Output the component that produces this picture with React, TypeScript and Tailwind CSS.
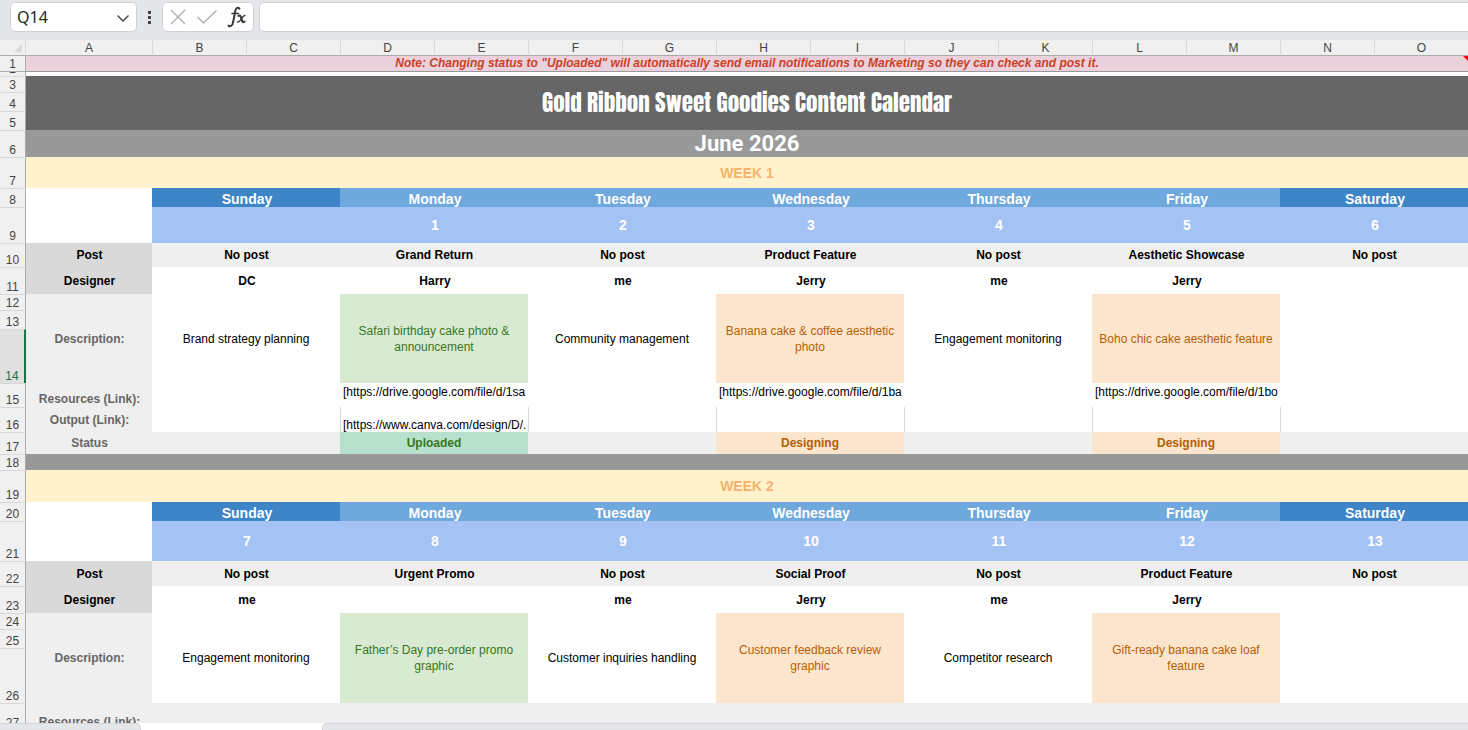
import React from "react";

type Tone = "green" | "orange";

interface Day {
  name: string;
  date: string;
  post: string;
  designer: string;
  description: string;
  tone?: Tone;
  resource?: string;
  output?: string;
  status?: string;
}

const weekOne: Day[] = [
  { name: "Sunday", date: "", post: "No post", designer: "DC", description: "Brand strategy planning" },
  {
    name: "Monday", date: "1", post: "Grand Return", designer: "Harry",
    description: "Safari birthday cake photo & announcement", tone: "green",
    resource: "[https://drive.google.com/file/d/1sa", output: "[https://www.canva.com/design/D/.", status: "Uploaded",
  },
  { name: "Tuesday", date: "2", post: "No post", designer: "me", description: "Community management" },
  {
    name: "Wednesday", date: "3", post: "Product Feature", designer: "Jerry",
    description: "Banana cake & coffee aesthetic photo", tone: "orange",
    resource: "[https://drive.google.com/file/d/1ba", status: "Designing",
  },
  { name: "Thursday", date: "4", post: "No post", designer: "me", description: "Engagement monitoring" },
  {
    name: "Friday", date: "5", post: "Aesthetic Showcase", designer: "Jerry",
    description: "Boho chic cake aesthetic feature", tone: "orange",
    resource: "[https://drive.google.com/file/d/1bo", status: "Designing",
  },
  { name: "Saturday", date: "6", post: "No post", designer: "", description: "" },
];

const weekTwo: Day[] = [
  { name: "Sunday", date: "7", post: "No post", designer: "me", description: "Engagement monitoring" },
  { name: "Monday", date: "8", post: "Urgent Promo", designer: "", description: "Father’s Day pre-order promo graphic", tone: "green" },
  { name: "Tuesday", date: "9", post: "No post", designer: "me", description: "Customer inquiries handling" },
  { name: "Wednesday", date: "10", post: "Social Proof", designer: "Jerry", description: "Customer feedback review graphic", tone: "orange" },
  { name: "Thursday", date: "11", post: "No post", designer: "me", description: "Competitor research" },
  { name: "Friday", date: "12", post: "Product Feature", designer: "Jerry", description: "Gift-ready banana cake loaf feature", tone: "orange" },
  { name: "Saturday", date: "13", post: "No post", designer: "", description: "" },
];

const columns = "ABCDEFGHIJKLMNO".split("");

const toneFill: Record<Tone, string> = {
  green: "bg-[#d9ead3] text-[#38761d]",
  orange: "bg-[#fce5cd] text-[#b45f06]",
};

const statusFill: Record<Tone, string> = {
  green: "bg-[#b7e1cd] text-[#38761d]",
  orange: "bg-[#fce5cd] text-[#b45f06]",
};

function RowNumber({ n, active = false }: { n: number; active?: boolean }) {
  const state = active
    ? "border-r-2 border-r-[#1e7145] bg-[#e0e0e0] text-[#1e7145]"
    : "border-r border-r-[#ababab] bg-[#f0f0f0] text-[#444]";
  return (
    <th scope="row" className={`border-t border-t-[#d8d8d8] p-0 text-center align-bottom text-xs leading-[14px] font-normal ${state}`}>
      {n}
    </th>
  );
}

function Label({ children, dark = false, rows = 1, align = "align-middle" }: { children: string; dark?: boolean; rows?: number; align?: string }) {
  const fill = dark ? "bg-[#d9d9d9] text-black" : "bg-[#efefef] text-[#666]";
  return (
    <th rowSpan={rows} className={`p-0 pl-px text-center text-xs leading-4 font-bold ${align} ${fill}`}>
      {children}
    </th>
  );
}

function WeekTitle({ n, label, height }: { n: number; label: string; height: string }) {
  return (
    <tr className={height}>
      <RowNumber n={n} />
      <td colSpan={15} className="bg-[#fff2cc] p-0 text-center align-middle text-sm leading-4 font-bold text-[#f6b26b]">
        {label}
      </td>
    </tr>
  );
}

interface WeekProps {
  start: number;
  days: Day[];
  dateHeight: string;
  postHeight: string;
  lastHeight: string;
  activeRow?: number;
}

function WeekDays({ start, days, dateHeight, postHeight, lastHeight, activeRow }: WeekProps) {
  return (
    <>
      <tr className="h-[19px]">
        <RowNumber n={start} />
        <td rowSpan={2} className="bg-white p-0" />
        {days.map((d, i) => (
          <th
            key={d.name}
            scope="col"
            colSpan={2}
            className={`p-0 pl-0.5 text-center align-bottom text-sm leading-4 font-bold text-white ${i === 0 || i === 6 ? "bg-[#3d85c6]" : "bg-[#6fa8dc]"}`}
          >
            {d.name}
          </th>
        ))}
      </tr>
      <tr className={dateHeight}>
        <RowNumber n={start + 1} />
        {days.map((d) => (
          <td key={d.name} colSpan={2} className="bg-[#a4c2f4] p-0 pl-0.5 text-center align-middle text-sm leading-4 font-bold text-white">
            {d.date}
          </td>
        ))}
      </tr>
      <tr className={postHeight}>
        <RowNumber n={start + 2} />
        <Label dark>Post</Label>
        {days.map((d) => (
          <td key={d.name} colSpan={2} className="bg-[#efefef] p-0 pl-px text-center align-middle text-xs leading-4 font-bold text-black">
            {d.post}
          </td>
        ))}
      </tr>
      <tr className="h-[27px]">
        <RowNumber n={start + 3} />
        <Label dark>Designer</Label>
        {days.map((d) => (
          <td key={d.name} colSpan={2} className="bg-white p-0 pl-0.5 text-center align-middle text-xs leading-4 font-bold text-black">
            {d.designer}
          </td>
        ))}
      </tr>
      <tr className="h-4">
        <RowNumber n={start + 4} />
        <Label rows={3}>Description:</Label>
        {days.map((d) => (
          <td
            key={d.name}
            colSpan={2}
            rowSpan={3}
            className={`px-1 py-0 text-center align-middle text-xs leading-4 ${d.tone ? toneFill[d.tone] : "bg-white text-black"}`}
          >
            {d.description}
          </td>
        ))}
      </tr>
      <tr className="h-[19px]">
        <RowNumber n={start + 5} />
      </tr>
      <tr className={lastHeight}>
        <RowNumber n={start + 6} active={activeRow === start + 6} />
      </tr>
    </>
  );
}

function FormulaBar() {
  return (
    <div className="flex h-10 shrink-0 items-start bg-[#e4e6ea] pt-[2px]">
      <div className="ml-[10px] flex h-[30px] w-[127px] items-center rounded-[5px] border border-[#d0d2d6] bg-white">
        <input aria-label="Name box" defaultValue="Q14" className="w-full min-w-0 flex-1 bg-transparent pl-[6px] font-['Noto_Sans',sans-serif] text-base leading-6 text-[#262626] outline-none" />
        <button type="button" aria-label="Open name list" className="mr-[6px]">
          <svg width="14" height="14" viewBox="0 0 14 14" fill="none" stroke="#444" strokeWidth="1.4">
            <path d="M1.500 5.500 7 11l5.500-5.500" />
          </svg>
        </button>
      </div>
      <svg className="ml-[10px] h-[30px] w-[5px]" viewBox="0 0 5 30" fill="#444">
        <path d="M1 9h3v3H1zM1 14h3v3H1zM1 19h3v3H1z" />
      </svg>
      <div className="ml-[10px] flex h-[30px] w-[92px] items-center justify-between rounded-[5px] border border-[#d0d2d6] bg-white px-[6px]">
        <button type="button" aria-label="Cancel">
          <svg width="18" height="18" viewBox="0 0 18 18" fill="none" stroke="#b0b0b0" strokeWidth="1.4">
            <path d="m2 2 14 14M16 2 2 16" />
          </svg>
        </button>
        <button type="button" aria-label="Enter">
          <svg width="22" height="18" viewBox="0 0 22 18" fill="none" stroke="#b0b0b0" strokeWidth="1.4">
            <path d="m1.500 9 6 6L20.500 2.500" />
          </svg>
        </button>
        <button type="button" aria-label="Insert function">
          <svg width="20" height="24" viewBox="0 0 20 24" fill="none" stroke="#3a3a3a" strokeLinecap="round" strokeLinejoin="round">
            <path d="M12.500 3.800C11 1.800 8.900 2.800 8.300 6L5.900 18c-.6 2.900-2.600 4-4.400 2.600" strokeWidth="2" />
            <path d="M5 8.500h6.500" strokeWidth="1.500" />
            <path d="M11.500 10.800c2-.8 2.300.4 3 3.200s1.200 3.900 3 2.700" strokeWidth="2.200" />
            <path d="M18 10.500c-1.800 0-2.500 1.900-3.700 3.700s-2 3-3.800 2.800" strokeWidth="1.400" />
          </svg>
        </button>
      </div>
      <input aria-label="Formula bar" className="ml-[5px] h-[30px] min-w-0 flex-1 rounded-l-[5px] border border-r-0 border-[#d0d2d6] bg-white px-2 text-sm outline-none" />
    </div>
  );
}

export default function App() {
  return (
    <div className="flex h-screen flex-col overflow-hidden bg-white font-['Liberation_Sans',Arial,sans-serif]">
      <FormulaBar />
      <main className="min-h-0 flex-1 overflow-hidden">
        <table className="w-full table-fixed border-separate border-spacing-0">
          <colgroup>
            <col className="w-[26px]" />
            <col className="w-[126px]" />
            <col span={14} />
          </colgroup>
          <thead>
            <tr className="h-4">
              <th className="border-r border-b border-r-[#d8d8d8] border-b-[#ababab] bg-[#f0f0f0] p-0">
                <svg className="mr-[3px] ml-auto h-2 w-2" viewBox="0 0 8 8" fill="#d8d8d8">
                  <path d="M8 0v8H0z" />
                </svg>
              </th>
              {columns.map((c, i) => (
                <th
                  key={c}
                  scope="col"
                  className={`border-b border-b-[#ababab] bg-[#f0f0f0] p-0 text-center align-middle text-xs leading-[14px] font-normal text-[#444] ${i > 0 ? "border-l border-l-[#d8d8d8]" : ""}`}
                >
                  {c}
                </th>
              ))}
            </tr>
          </thead>
          <tbody>
            <tr className="h-4">
              <th scope="row" className="border-r border-b border-[#ababab] bg-[#f0f0f0] p-0 text-center align-bottom text-xs leading-[14px] font-normal text-[#444]">1</th>
              <td colSpan={15} className="relative border-b border-[#999] bg-[#ead1dc] p-0 text-center align-top text-xs leading-[14px] font-bold text-[#cc4125] italic">
                Note: Changing status to "Uploaded" will automatically send email notifications to Marketing so they can check and post it.
                <svg className="absolute top-0 right-0 h-[5px] w-[5px]" viewBox="0 0 5 5" fill="#f00">
                  <path d="M0 0h5v5z" />
                </svg>
              </td>
            </tr>
            <tr className="h-1">
              <th scope="row" className="border-r border-[#ababab] bg-[#f0f0f0] p-0 text-xs font-normal text-[#444]">
                <div className="flex h-1 items-end justify-center overflow-hidden leading-[14px]">2</div>
              </th>
              <td colSpan={15} className="bg-white p-0" />
            </tr>
            <tr className="h-4">
              <RowNumber n={3} />
              <td colSpan={15} rowSpan={3} className="bg-[#666] p-0 text-center align-middle font-['Impact','Anton','Liberation_Sans_Narrow',sans-serif] text-[23px] leading-7 font-normal text-white">
                Gold Ribbon Sweet Goodies Content Calendar
              </td>
            </tr>
            <tr className="h-[19px]"><RowNumber n={4} /></tr>
            <tr className="h-[19px]"><RowNumber n={5} /></tr>
            <tr className="h-[27px]">
              <RowNumber n={6} />
              <td colSpan={15} className="bg-[#999] p-0 text-center align-middle font-['Roboto',sans-serif] text-[22px] leading-6 font-bold text-white">
                June 2026
              </td>
            </tr>
            <WeekTitle n={7} label="WEEK 1" height="h-[31px]" />
            <WeekDays start={8} days={weekOne} dateHeight="h-9" postHeight="h-6" lastHeight="h-[54px]" activeRow={14} />
            <tr className="h-6">
              <RowNumber n={15} />
              <Label align="align-bottom">Resources (Link):</Label>
              {weekOne.map((d) => (
                <td key={d.name} colSpan={2} className="overflow-hidden bg-white p-0 pl-[3px] text-left align-top text-xs leading-[18px] whitespace-nowrap text-black">
                  {d.resource}
                </td>
              ))}
            </tr>
            <tr className="h-[25px]">
              <RowNumber n={16} />
              <Label>Output (Link):</Label>
              {weekOne.map((d, i) => (
                <td
                  key={d.name}
                  colSpan={2}
                  className={`overflow-hidden bg-white p-0 pl-[2px] text-left align-bottom text-xs leading-[14px] whitespace-nowrap text-black ${i > 0 ? "border-l border-[#d8d8d8]" : ""}`}
                >
                  {d.output}
                </td>
              ))}
            </tr>
            <tr className="h-[22px]">
              <RowNumber n={17} />
              <Label>Status</Label>
              {weekOne.map((d) => (
                <td key={d.name} colSpan={2} className={`p-0 text-center align-middle text-xs leading-4 font-bold ${d.tone ? statusFill[d.tone] : "bg-[#efefef]"}`}>
                  {d.status}
                </td>
              ))}
            </tr>
            <tr className="h-4">
              <RowNumber n={18} />
              <td colSpan={15} className="bg-[#999] p-0" />
            </tr>
            <WeekTitle n={19} label="WEEK 2" height="h-8" />
            <WeekDays start={20} days={weekTwo} dateHeight="h-10" postHeight="h-[25px]" lastHeight="h-[55px]" />
            <tr className="h-[27px]">
              <RowNumber n={27} />
              <Label align="align-bottom">Resources (Link):</Label>
              <td colSpan={14} className="bg-[#efefef] p-0" />
            </tr>
          </tbody>
        </table>
      </main>
      <footer className="flex h-[7px] shrink-0 bg-white">
        <div className="w-[141px] rounded-tr-[5px] border-t border-r border-[#d4d6da] bg-[#e4e6ea]" />
        <div className="w-[181px]" />
        <div className="flex-1 rounded-tl-[5px] border-t border-l border-[#d4d6da] bg-[#e4e6ea]" />
      </footer>
    </div>
  );
}
